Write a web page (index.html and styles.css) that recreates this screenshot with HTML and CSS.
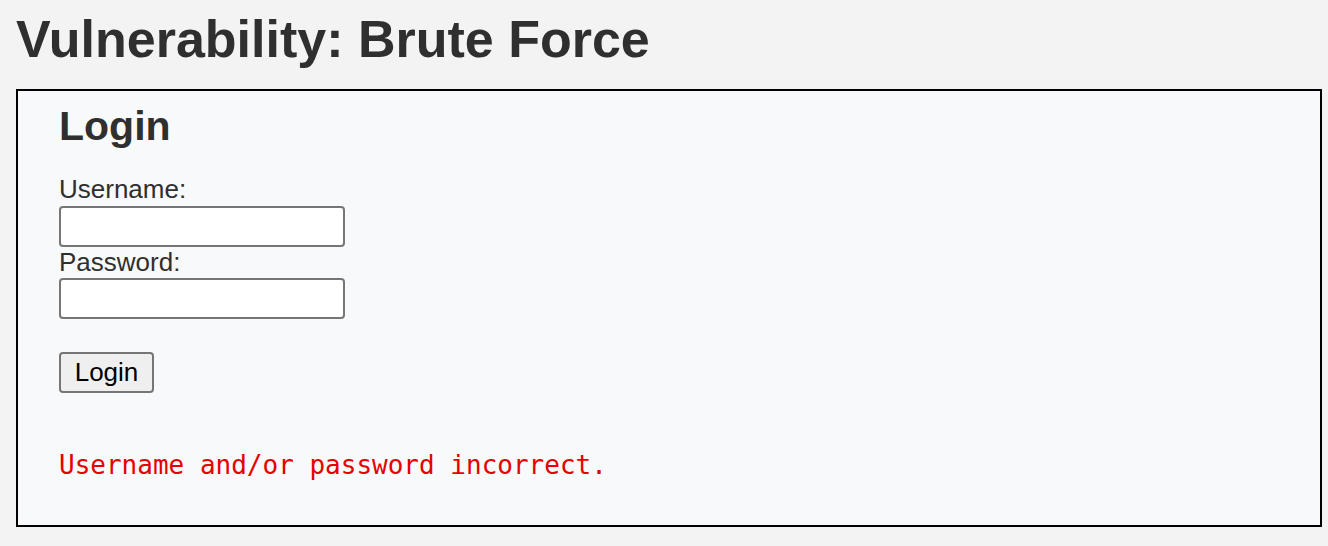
FILE: index.html
```html
<!DOCTYPE html>
<html>
<head>
<meta charset="utf-8">
<link rel="stylesheet" href="styles.css">
</head>
<body>
<h1 class="title">Vulnerability: Brute Force</h1>
<div class="vulnerable-code-area">
  <form class="login-form">
    <h2 class="form-title">Login</h2>
    <label class="field-label" for="username">Username:</label>
    <input class="text-input" type="text" id="username" name="username">
    <label class="field-label pw" for="password">Password:</label>
    <input class="text-input" type="password" id="password" name="password">
    <button class="login-btn" type="button">Login</button>
    <pre class="error-msg">Username and/or password incorrect.</pre>
  </form>
</div>
</body>
</html>
```
FILE: styles.css
```css
html, body {
  margin: 0;
  padding: 0;
}
body {
  background: #f3f3f3;
  font-family: "Liberation Sans", Arial, sans-serif;
  color: #2f2f2f;
  width: 1328px;
  height: 546px;
  overflow: hidden;
}
.title {
  margin: 0;
  padding: 0 0 0 16px;
  font-size: 52px;
  font-weight: bold;
  line-height: 78px;
  height: 89px;
  box-sizing: border-box;
  color: #2f2f2f;
}
.vulnerable-code-area {
  margin: 0 6px 0 16px;
  border: 2px solid #000;
  background: #f8f9fa;
  height: 438px;
  box-sizing: border-box;
  padding: 0 0 0 41px;
}
.login-form {
  display: flex;
  flex-direction: column;
  align-items: flex-start;
}
.form-title {
  margin: 11px 0 0 0;
  font-size: 41px;
  line-height: 48px;
  font-weight: bold;
  color: #2f2f2f;
}
.field-label {
  display: block;
  font-size: 26px;
  line-height: 30px;
  margin-top: 24px;
  color: #2f2f2f;
}
.field-label.pw {
  margin-top: 0;
}
.text-input {
  display: block;
  width: 286px;
  height: 41px;
  box-sizing: border-box;
  margin: 2px 0 0 0;
  border: 2px solid #767676;
  border-radius: 4px;
  background: #fff;
  padding: 0 4px;
  font-size: 24px;
}
.field-label.pw + .text-input {
  margin-top: 1px;
}
.login-btn {
  margin: 33px 0 0 0;
  width: 95px;
  height: 41px;
  box-sizing: border-box;
  border: 2px solid #767676;
  border-radius: 4px;
  background: #efefef;
  color: #000;
  font-family: "Liberation Sans", Arial, sans-serif;
  font-size: 26px;
  padding: 0;
  line-height: 37px;
}
.error-msg {
  margin: 55px 0 0 0;
  font-family: "DejaVu Sans Mono", monospace;
  font-size: 26px;
  line-height: 34px;
  color: #e60000;
}
```
